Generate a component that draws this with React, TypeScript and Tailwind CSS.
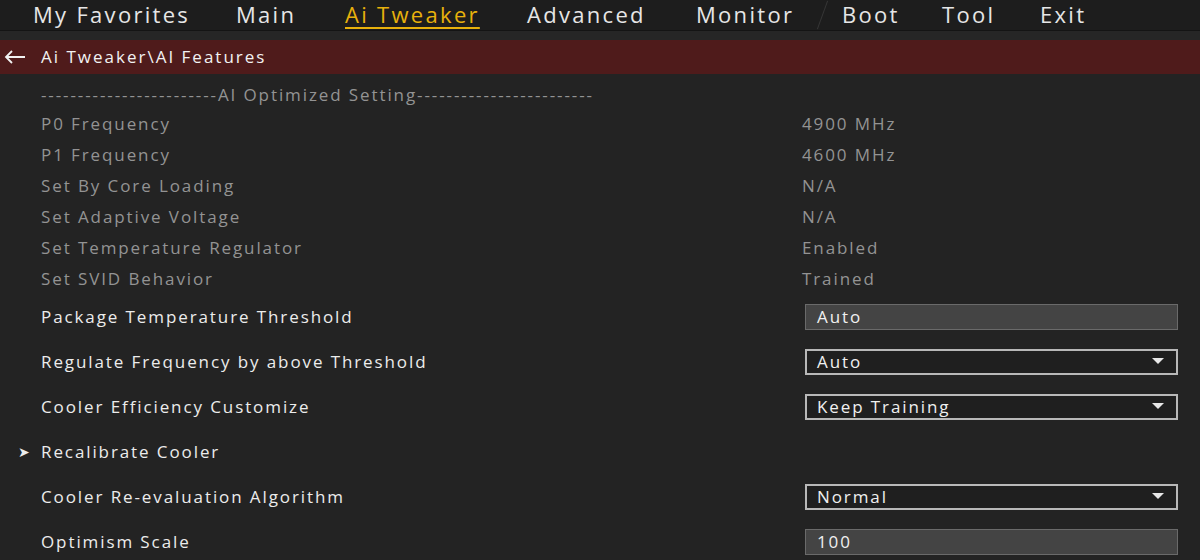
import React from "react";

// fixed-width tab cells, like the firmware menu bar
const tabs: [string, string][] = [
    ["My Favorites", "w-[203px]"],
    ["Main", "w-[109px]"],
    ["Ai Tweaker", "w-[182px]"],
    ["Advanced", "w-[169px]"],
    ["Monitor", "w-[146px]"],
    ["Boot", "w-[100px]"],
    ["Tool", "w-[98px]"],
    ["Exit", "w-[80px]"],
];

const infoRows: [string, string][] = [
    ["P0 Frequency", "4900 MHz"],
    ["P1 Frequency", "4600 MHz"],
    ["Set By Core Loading", "N/A"],
    ["Set Adaptive Voltage", "N/A"],
    ["Set Temperature Regulator", "Enabled"],
    ["Set SVID Behavior", "Trained"],
];

type Setting = { label: string; value?: string; kind: "input" | "select" | "link" };

const settings: Setting[] = [
    { label: "Package Temperature Threshold", value: "Auto", kind: "input" },
    { label: "Regulate Frequency by above Threshold", value: "Auto", kind: "select" },
    { label: "Cooler Efficiency Customize", value: "Keep Training", kind: "select" },
    { label: "Recalibrate Cooler", kind: "link" },
    { label: "Cooler Re-evaluation Algorithm", value: "Normal", kind: "select" },
    { label: "Optimism Scale", value: "100", kind: "input" },
];

function Caret() {
    return (
        <svg width="12" height="7" viewBox="0 0 12 7" className="mr-[12px]">
            <path d="M0 0 H12 L6 6 Z" fill="#e8e8e8" />
        </svg>
    );
}

function Field({ s }: { s: Setting }) {
    if (s.kind === "link") return null;
    if (s.kind === "input") {
        return (
            <div className="flex h-[26px] w-[373px] items-center border border-[#6a6a6a] bg-[#444444] pl-[11px] text-[#f0f0f0]">
                {s.value}
            </div>
        );
    }
    return (
        <div className="flex h-[26px] w-[373px] items-center justify-between border-2 border-[#b8b8b8] bg-[#1f1f1f] pl-[10px] text-[#f0f0f0]">
            <span>{s.value}</span>
            <Caret />
        </div>
    );
}

export default function App() {
    return (
        <div
            className="h-[560px] w-[1200px] overflow-hidden bg-[#232323]"
            style={{ fontFamily: '"Open Sans", "Noto Sans", sans-serif' }}
        >
            <div className="relative flex h-[31px] items-start border-b border-[#141414] bg-[#1d1d1d] pl-[33px] text-[22px] leading-[29px] tracking-[2.3px] text-[#e6e6e6]">
                {tabs.map(([t, w]) => (
                    <div key={t} className={w}>
                        <span
                            className={
                                t === "Ai Tweaker"
                                    ? "text-[#e8b10c] underline decoration-2 underline-offset-[4px]"
                                    : ""
                            }
                        >
                            {t}
                        </span>
                    </div>
                ))}
                <div className="absolute left-[822px] top-0 h-[30px] w-px rotate-[20deg] bg-[#363636]" />
            </div>

            <div className="h-[9px] bg-[#262626]" />

            <div className="flex h-[34px] items-center bg-[#4f1b1b] text-[17px] tracking-[2px] text-[#f2f2f2]">
                <svg width="22" height="14" viewBox="0 0 22 14" className="ml-[4px] mr-[15px]">
                    <path d="M21 7 H2 M8 1 L2 7 L8 13" stroke="#f2f2f2" strokeWidth="1.8" fill="none" />
                </svg>
                <span>Ai Tweaker\AI Features</span>
            </div>

            <div className="pl-[41px] pt-[8px] text-[17px] tracking-[1.9px] text-[#939393]">
                <div className="flex h-[26px] items-center">
                    ------------------------AI Optimized Setting------------------------
                </div>
                {infoRows.map(([label, value]) => (
                    <div key={label} className="flex h-[31px] items-center">
                        <span className="w-[761px]">{label}</span>
                        <span>{value}</span>
                    </div>
                ))}
            </div>

            <div className="text-[17px] tracking-[1.9px] text-[#ececec]">
                {settings.map((s) => (
                    <div key={s.label} className="flex h-[45px] items-center">
                        <span className="flex w-[805px] items-center">
                            <span className="w-[41px] pl-[18px] text-[14px] tracking-normal">
                                {s.kind === "link" ? "➤" : ""}
                            </span>
                            <span>{s.label}</span>
                        </span>
                        <Field s={s} />
                    </div>
                ))}
            </div>
        </div>
    );
}
